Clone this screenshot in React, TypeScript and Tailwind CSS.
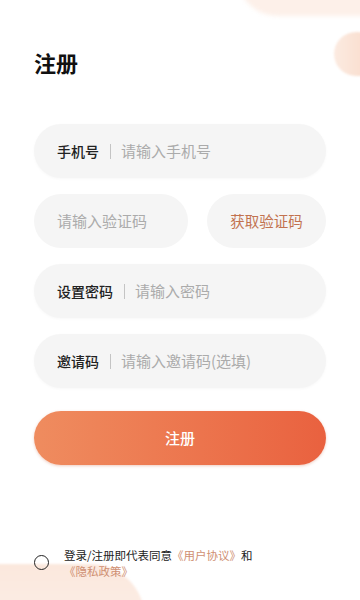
import React from 'react';

const Field: React.FC<{ label: string; placeholder: string }> = ({ label, placeholder }) => (
  <div className="h-[54px] rounded-full bg-[#f5f5f5] flex items-center pl-[23px] shadow-[0_1px_3px_rgba(0,0,0,0.03)]">
    <span className="text-[14px] text-[#222] font-medium">{label}</span>
    <span className="ml-[11px] mr-[10px] w-px h-[15px] bg-[#c4c4c4]" />
    <span className="text-[15px] text-[#ababab]">{placeholder}</span>
  </div>
);

export default function App() {
  return (
    <div
      className="relative w-[360px] h-[600px] overflow-hidden bg-white"
      style={{ fontFamily: '"Noto Sans CJK SC", "Noto Sans", sans-serif' }}
    >
      {/* decorative blobs */}
      <div className="absolute left-[238px] top-[-62px] w-[210px] h-[78px] rounded-full bg-[#fdf0e9] blur-[2px]" />
      <div className="absolute left-[334px] top-[32px] w-[46px] h-[44px] rounded-full bg-gradient-to-r from-[#fcebe1] to-[#f8d8c6] blur-[1px]" />
      <div className="absolute left-[-70px] top-[564px] w-[215px] h-[110px] rounded-full bg-gradient-to-b from-[#fbe8dd] to-[#fdf3ee] blur-[1px]" />

      <div className="relative px-[34px]">
        <h1 className="pt-[48px] text-[22px] leading-[28px] font-bold text-[#111]">注册</h1>

        <div className="mt-[48px] flex flex-col gap-[16px]">
          <Field label="手机号" placeholder="请输入手机号" />
          <div className="flex gap-[19px]">
            <div className="h-[54px] w-[154px] rounded-full bg-[#f5f5f5] flex items-center pl-[23px] text-[15px] text-[#ababab]">
              请输入验证码
            </div>
            <div className="h-[54px] flex-1 rounded-full bg-[#f5f5f5] flex items-center justify-center text-[14.5px] text-[#c2724f]">
              获取验证码
            </div>
          </div>
          <Field label="设置密码" placeholder="请输入密码" />
          <Field label="邀请码" placeholder="请输入邀请码(选填)" />
        </div>

        <button className="mt-[23px] w-full h-[54px] rounded-full bg-gradient-to-r from-[#ef8c5f] to-[#e9613f] text-white text-[15px] font-medium shadow-[0_1px_3px_rgba(200,90,50,0.3)]">
          注册
        </button>

        <div className="mt-[82px] flex items-start gap-[15px]">
          <span className="mt-[8px] w-[15px] h-[15px] rounded-full border-[1.5px] border-[#222] shrink-0" />
          <p className="text-[11.5px] leading-[16px] text-[#222]">
            登录/注册即代表同意<span className="text-[#cf8f72]">《用户协议》</span>和
            <br />
            <span className="text-[#cf8f72]">《隐私政策》</span>
          </p>
        </div>
      </div>
    </div>
  );
}
